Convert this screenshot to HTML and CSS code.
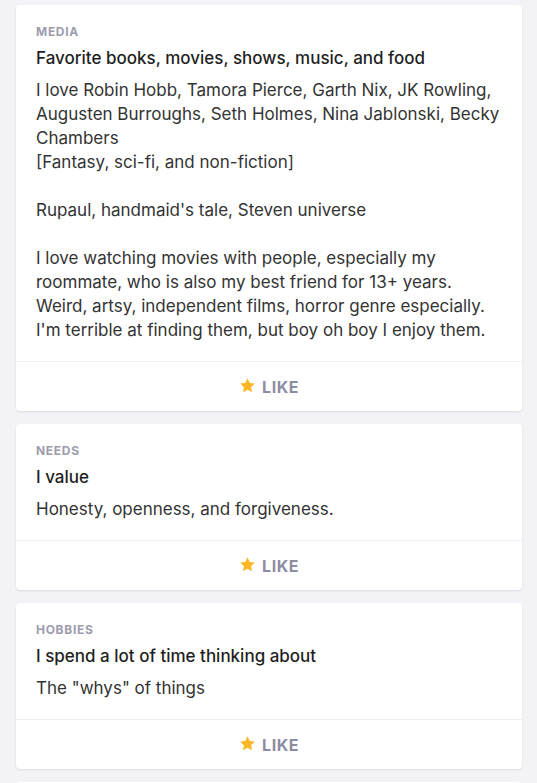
FILE: index.html
```html
<!DOCTYPE html>
<html lang="en">
<head>
    <meta charset="UTF-8">
    <meta name="viewport" content="width=device-width, initial-scale=1.0">
    <title>Profile essays</title>
    <link rel="stylesheet" href="styles.css">
</head>
<body>
    <div class="essays">
        <div class="card">
            <div class="card-body">
                <div class="label">Media</div>
                <h2 class="title">Favorite books, movies, shows, music, and food</h2>
                <p class="answer">I love Robin Hobb, Tamora Pierce, Garth Nix, JK Rowling, Augusten Burroughs, Seth Holmes, Nina Jablonski, Becky Chambers
[Fantasy, sci-fi, and non-fiction]

Rupaul, handmaid's tale, Steven universe

I love watching movies with people, especially my roommate, who is also my best friend for 13+ years. Weird, artsy, independent films, horror genre especially. I'm terrible at finding them, but boy oh boy I enjoy them.</p>
            </div>
            <button class="like">
                <svg class="star" viewBox="0 0 24 24" width="17" height="17"><path d="M12 1.8l3.1 6.6 7.2.9-5.3 5 1.4 7.1L12 17.9l-6.4 3.5 1.4-7.1-5.3-5 7.2-.9z"/></svg>
                <span>Like</span>
            </button>
        </div>

        <div class="card">
            <div class="card-body">
                <div class="label">Needs</div>
                <h2 class="title">I value</h2>
                <p class="answer">Honesty, openness, and forgiveness.</p>
            </div>
            <button class="like">
                <svg class="star" viewBox="0 0 24 24" width="17" height="17"><path d="M12 1.8l3.1 6.6 7.2.9-5.3 5 1.4 7.1L12 17.9l-6.4 3.5 1.4-7.1-5.3-5 7.2-.9z"/></svg>
                <span>Like</span>
            </button>
        </div>

        <div class="card">
            <div class="card-body">
                <div class="label">Hobbies</div>
                <h2 class="title">I spend a lot of time thinking about</h2>
                <p class="answer">The "whys" of things</p>
            </div>
            <button class="like">
                <svg class="star" viewBox="0 0 24 24" width="17" height="17"><path d="M12 1.8l3.1 6.6 7.2.9-5.3 5 1.4 7.1L12 17.9l-6.4 3.5 1.4-7.1-5.3-5 7.2-.9z"/></svg>
                <span>Like</span>
            </button>
        </div>

        <div class="card"></div>
    </div>
</body>
</html>
```
FILE: styles.css
```css
body {
    background: #f3f3f7;
    color: #2b2b2b;
    font-family: Inter, "Noto Sans", sans-serif;
    margin: 0;
    padding: 5px 15px 0 16px;
}

.essays {
    display: flex;
    flex-direction: column;
    gap: 13px;
}

.card {
    background: #fff;
    border-radius: 4px;
    box-shadow: 0 1px 2px rgba(30, 30, 60, 0.12);
    min-height: 20px;
}

.card-body {
    padding: 19px 20px 19px;
    border-bottom: 1px solid #f0f0f4;
}

.label {
    font-size: 12px;
    line-height: 16px;
    font-weight: 700;
    letter-spacing: 0.7px;
    text-transform: uppercase;
    color: #9d9cae;
}

.title {
    margin: 6px 0 0;
    font-size: 17px;
    line-height: 24px;
    font-weight: 500;
    color: #1f1f1f;
}

.answer {
    margin: 8px 0 0;
    font-size: 17px;
    line-height: 24px;
    white-space: pre-line;
    color: #333;
}

.like {
    display: flex;
    align-items: center;
    justify-content: center;
    gap: 6px;
    width: 100%;
    height: 49px;
    border: 0;
    background: none;
    font-family: inherit;
    font-size: 16px;
    font-weight: 700;
    letter-spacing: 0.5px;
    text-transform: uppercase;
    color: #8d8ca3;
    cursor: pointer;
}

.star {
    fill: #fbb626;
    margin-top: -2px;
}
```
